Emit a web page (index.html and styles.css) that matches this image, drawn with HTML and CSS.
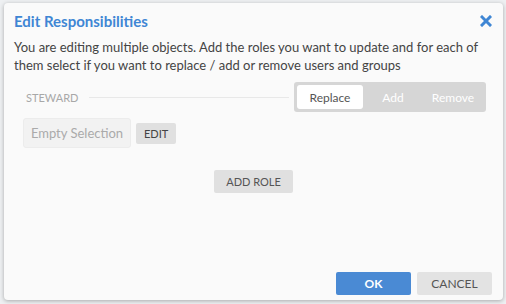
FILE: index.html
```html
<!DOCTYPE html>
<html lang="en">
<head>
  <meta charset="UTF-8" />
  <title>Edit Responsibilities</title>
  <link rel="stylesheet" href="styles.css">
</head>
<body>
  <div class="dialog">
    <div class="dialog-header">
      <h1>Edit Responsibilities</h1>
      <button class="close-btn" aria-label="Close">
        <svg width="12" height="12" viewBox="0 0 12 12">
          <path d="M2 2 L10 10 M10 2 L2 10" stroke="#3f86d4" stroke-width="3" stroke-linecap="square"/>
        </svg>
      </button>
    </div>

    <p class="intro">You are editing multiple objects. Add the roles you want to update and for each of them select if you want to replace / add or remove users and groups</p>

    <div class="role">
      <div class="role-head">
        <span class="role-name">STEWARD</span>
        <span class="role-line"></span>
        <div class="segmented">
          <button class="seg active">Replace</button>
          <button class="seg">Add</button>
          <button class="seg">Remove</button>
        </div>
      </div>
      <div class="role-body">
        <div class="selection">Empty Selection</div>
        <button class="small-btn">EDIT</button>
      </div>
    </div>

    <div class="add-row">
      <button class="add-btn">ADD ROLE</button>
    </div>

    <div class="dialog-footer">
      <button class="ok-btn">OK</button>
      <button class="cancel-btn">CANCEL</button>
    </div>
  </div>
</body>
</html>
```

FILE: styles.css
```css
* {
  box-sizing: border-box;
}

body {
  margin: 0;
  width: 506px;
  height: 304px;
  background: #eef0f2;
  font-family: Lato, 'Open Sans', sans-serif;
  color: #444;
  padding: 3px 3px 4px 4px;
  overflow: hidden;
}

button {
  font-family: inherit;
  border: none;
  cursor: pointer;
}

.dialog {
  background: #fafafa;
  border-radius: 4px;
  box-shadow: 0 1px 4px rgba(0, 0, 0, 0.3);
  height: 297px;
  display: flex;
  flex-direction: column;
}

.dialog-header {
  display: flex;
  align-items: center;
  justify-content: space-between;
  padding: 6px 10px 0 10px;
  height: 29px;
}

.dialog-header h1 {
  margin: 0;
  font-size: 15px;
  font-weight: bold;
  color: #3f86d4;
}

.close-btn {
  background: none;
  padding: 0;
  width: 14px;
  height: 14px;
  display: flex;
  align-items: center;
  justify-content: center;
}

.intro {
  margin: 6px 10px 0 10px;
  font-size: 13px;
  line-height: 18px;
  color: #444;
}

.role {
  margin: 8px 17px 0 19px;
}

.role-head {
  display: flex;
  align-items: center;
  height: 30px;
}

.role-name {
  font-size: 11px;
  color: #a8a8a8;
  padding-left: 3px;
}

.role-line {
  flex: 1;
  height: 1px;
  background: #e8e8e8;
  margin: 0 5px 0 11px;
}

.segmented {
  display: flex;
  background: #d6d6d6;
  border-radius: 3px;
  padding: 3px;
  width: 192px;
}

.seg {
  height: 24px;
  background: none;
  color: #fff;
  font-size: 12px;
  flex: 1;
  border-radius: 3px;
}

.seg.active {
  background: #fff;
  color: #555;
  flex: 0 0 66px;
}

.role-body {
  display: flex;
  align-items: center;
  gap: 5px;
  margin-top: 6px;
}

.selection {
  width: 108px;
  height: 30px;
  background: #f2f2f2;
  border: 1px solid #ececec;
  border-radius: 3px;
  font-size: 13px;
  color: #aaa;
  display: flex;
  align-items: center;
  justify-content: center;
}

.small-btn {
  height: 21px;
  padding: 0 8px;
  background: #e0e0e0;
  color: #444;
  font-size: 11px;
  border-radius: 2px;
}

.add-row {
  display: flex;
  justify-content: center;
  margin-top: 22px;
}

.add-btn {
  width: 79px;
  height: 23px;
  background: #e0e0e0;
  color: #555;
  font-size: 11px;
  border-radius: 2px;
}

.dialog-footer {
  margin-top: auto;
  display: flex;
  justify-content: flex-end;
  gap: 6px;
  padding: 0 11px 5px 0;
}

.ok-btn {
  width: 75px;
  height: 23px;
  background: #4a8ad4;
  color: #fff;
  font-weight: bold;
  font-size: 12px;
  border-radius: 2px;
}

.cancel-btn {
  width: 75px;
  height: 23px;
  background: #e3e3e3;
  color: #555;
  font-size: 12px;
  border-radius: 2px;
}
```
